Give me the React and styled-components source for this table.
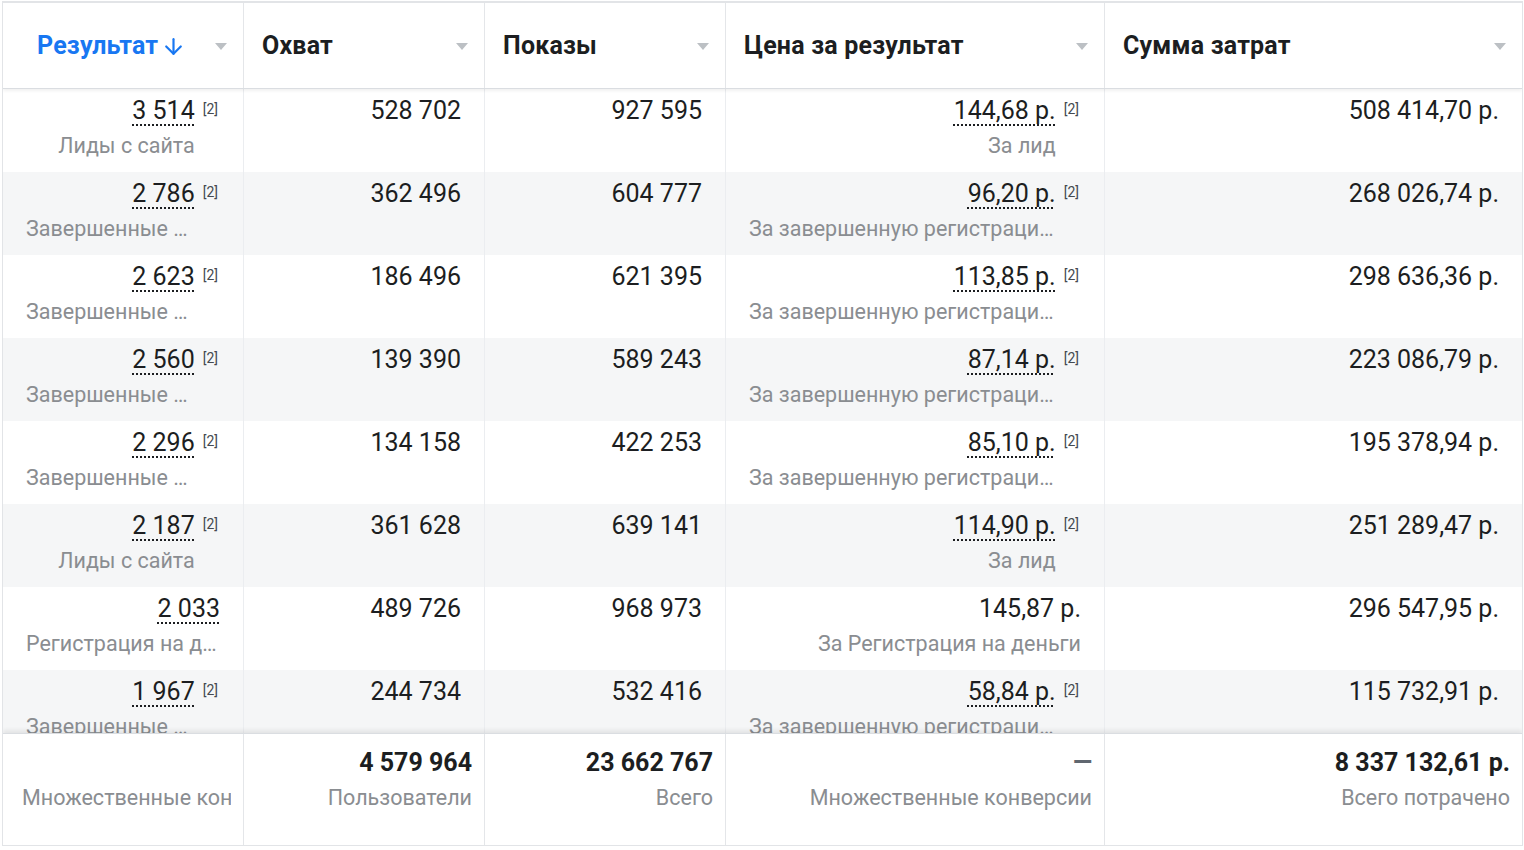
import React from "react";
import styled, { createGlobalStyle } from "styled-components";
import { ArrowDown } from "lucide-react";

const GlobalStyle = createGlobalStyle`
  html, body {
    margin: 0;
    padding: 0;
    background: #ffffff;
  }
  body {
    font-family: Roboto, "Noto Sans", "Liberation Sans", sans-serif;
    color: #1c1e21;
  }
  * {
    box-sizing: border-box;
  }
`;

const COLS = "240px 241px 241px 379px 1fr";

const columns = [
  { title: "Результат", sorted: true, first: true },
  { title: "Охват" },
  { title: "Показы" },
  { title: "Цена за результат" },
  { title: "Сумма затрат" },
];

const rows = [
  {
    result: "3 514", resultNote: true, resultSub: "Лиды с сайта",
    reach: "528 702", shows: "927 595",
    price: "144,68 р.", priceNote: true, priceSub: "За лид",
    spent: "508 414,70 р.",
  },
  {
    result: "2 786", resultNote: true, resultSub: "Завершенные регистрации",
    reach: "362 496", shows: "604 777",
    price: "96,20 р.", priceNote: true, priceSub: "За завершенную регистрацию",
    spent: "268 026,74 р.",
  },
  {
    result: "2 623", resultNote: true, resultSub: "Завершенные регистрации",
    reach: "186 496", shows: "621 395",
    price: "113,85 р.", priceNote: true, priceSub: "За завершенную регистрацию",
    spent: "298 636,36 р.",
  },
  {
    result: "2 560", resultNote: true, resultSub: "Завершенные регистрации",
    reach: "139 390", shows: "589 243",
    price: "87,14 р.", priceNote: true, priceSub: "За завершенную регистрацию",
    spent: "223 086,79 р.",
  },
  {
    result: "2 296", resultNote: true, resultSub: "Завершенные регистрации",
    reach: "134 158", shows: "422 253",
    price: "85,10 р.", priceNote: true, priceSub: "За завершенную регистрацию",
    spent: "195 378,94 р.",
  },
  {
    result: "2 187", resultNote: true, resultSub: "Лиды с сайта",
    reach: "361 628", shows: "639 141",
    price: "114,90 р.", priceNote: true, priceSub: "За лид",
    spent: "251 289,47 р.",
  },
  {
    result: "2 033", resultNote: false, resultSub: "Регистрация на деньги",
    reach: "489 726", shows: "968 973",
    price: "145,87 р.", priceNote: false, plainPrice: true, priceSub: "За Регистрация на деньги",
    spent: "296 547,95 р.",
  },
  {
    result: "1 967", resultNote: true, resultSub: "Завершенные регистрации",
    reach: "244 734", shows: "532 416",
    price: "58,84 р.", priceNote: true, priceSub: "За завершенную регистрацию",
    spent: "115 732,91 р.",
  },
];

const totals = [
  { value: "", sub: "Множественные конверсии", clip: true },
  { value: "4 579 964", sub: "Пользователи" },
  { value: "23 662 767", sub: "Всего" },
  { value: "—", sub: "Множественные конверсии", dash: true },
  { value: "8 337 132,61 р.", sub: "Всего потрачено" },
];

const ValueCell = ({ value, note, sub, dotted }) => (
  <Cell>
    <Stack>
      <Num $dotted={dotted}>{value}</Num>
      {sub && <Sub>{sub}</Sub>}
    </Stack>
    {note && <Note>[2]</Note>}
  </Cell>
);

const App = () => {
  return (
    <>
      <GlobalStyle />
      <Frame>
        <HeaderRow>
          {columns.map((col) => (
            <HeadCell key={col.title} $first={col.first}>
              <HeadTitle $sorted={col.sorted}>
                {col.title}
                {col.sorted && <ArrowDown size={25} strokeWidth={2.1} />}
              </HeadTitle>
              <Caret />
            </HeadCell>
          ))}
        </HeaderRow>

        <Body>
          {rows.map((r, i) => (
            <Row key={i} $striped={i % 2 === 1}>
              <ValueCell
                value={r.result}
                note={r.resultNote}
                sub={r.resultSub}
                dotted
              />
              <ValueCell value={r.reach} />
              <ValueCell value={r.shows} />
              <ValueCell
                value={r.price}
                note={r.priceNote}
                sub={r.priceSub}
                dotted={!r.plainPrice}
              />
              <ValueCell value={r.spent} />
            </Row>
          ))}
        </Body>

        <Footer>
          {totals.map((t, i) => (
            <FootCell key={i}>
              <FootValue $dash={t.dash}>{t.value || "\u00a0"}</FootValue>
              <FootSub $clip={t.clip}>{t.sub}</FootSub>
            </FootCell>
          ))}
        </Footer>
      </Frame>
    </>
  );
};

const Frame = styled.div`
  margin: 1px 0 0 2px;
  width: 1521px;
  height: 845px;
  border: 1px solid #e2e4e7;
  border-top-width: 2px;
  display: flex;
  flex-direction: column;
  overflow: hidden;
  background: #ffffff;
`;

const HeaderRow = styled.div`
  display: grid;
  grid-template-columns: ${COLS};
  height: 86px;
  flex-shrink: 0;
  border-bottom: 1px solid #dadde1;
  box-shadow: 0 2px 3px rgba(0, 0, 0, 0.06);
  position: relative;
  z-index: 1;
  background: #ffffff;
`;

const HeadCell = styled.div`
  display: flex;
  align-items: center;
  justify-content: space-between;
  padding: 0 16px 0 ${(p) => (p.$first ? "34px" : "18px")};
  border-left: 1px solid #e4e6e9;
  min-width: 0;

  &:first-child {
    border-left: none;
  }
`;

const HeadTitle = styled.div`
  display: flex;
  align-items: center;
  gap: 3px;
  font-size: 25px;
  font-weight: 700;
  letter-spacing: 0.2px;
  color: ${(p) => (p.$sorted ? "#1877f2" : "#1c1e21")};
  white-space: nowrap;

  svg {
    margin-top: 2px;
  }
`;

const Caret = styled.span`
  flex-shrink: 0;
  width: 0;
  height: 0;
  border-left: 6px solid transparent;
  border-right: 6px solid transparent;
  border-top: 7px solid #bcc0c4;
  margin-top: 2px;
`;

const Body = styled.div`
  flex: 1;
  overflow: hidden;
`;

const Row = styled.div`
  display: grid;
  grid-template-columns: ${COLS};
  height: 83px;
  background: ${(p) => (p.$striped ? "#f5f6f7" : "#ffffff")};
`;

const Cell = styled.div`
  display: flex;
  justify-content: flex-end;
  align-items: flex-start;
  padding: 7px 23px 0 23px;
  border-left: 1px solid #ebedf0;
  min-width: 0;

  &:first-child {
    border-left: none;
  }
`;

const Stack = styled.div`
  display: flex;
  flex-direction: column;
  align-items: flex-end;
  min-width: 0;
`;

const Num = styled.span`
  font-size: 25px;
  line-height: 30px;
  color: #1c1e21;
  white-space: nowrap;
  text-decoration: ${(p) => (p.$dotted ? "underline dotted" : "none")};
  text-decoration-thickness: 2px;
  text-underline-offset: 5px;
`;

const Sub = styled.span`
  display: block;
  max-width: 100%;
  margin-top: 7px;
  font-size: 21.5px;
  line-height: 26px;
  color: #8a8d91;
  white-space: nowrap;
  overflow: hidden;
  text-overflow: ellipsis;
`;

const Note = styled.span`
  flex-shrink: 0;
  margin: 5px 2px 0 8px;
  font-size: 14px;
  line-height: 16px;
  color: #444950;
`;

const Footer = styled.div`
  display: grid;
  grid-template-columns: ${COLS};
  height: 112px;
  flex-shrink: 0;
  border-top: 1px solid #dadde1;
  box-shadow: 0 -3px 4px rgba(0, 0, 0, 0.07);
  position: relative;
  background: #ffffff;
`;

const FootCell = styled.div`
  display: flex;
  flex-direction: column;
  align-items: stretch;
  padding: 14px 12px 0 19px;
  border-left: 1px solid #e4e6e9;
  text-align: right;
  min-width: 0;
  overflow: hidden;

  &:first-child {
    border-left: none;
  }
`;

const FootValue = styled.div`
  font-size: 25px;
  line-height: 30px;
  font-weight: 700;
  color: ${(p) => (p.$dash ? "#606770" : "#1c1e21")};
  white-space: nowrap;
`;

const FootSub = styled.div`
  margin-top: 7px;
  font-size: 21.5px;
  line-height: 26px;
  color: #8a8d91;
  white-space: nowrap;
  overflow: hidden;
  text-align: ${(p) => (p.$clip ? "left" : "right")};
`;

export default App;
